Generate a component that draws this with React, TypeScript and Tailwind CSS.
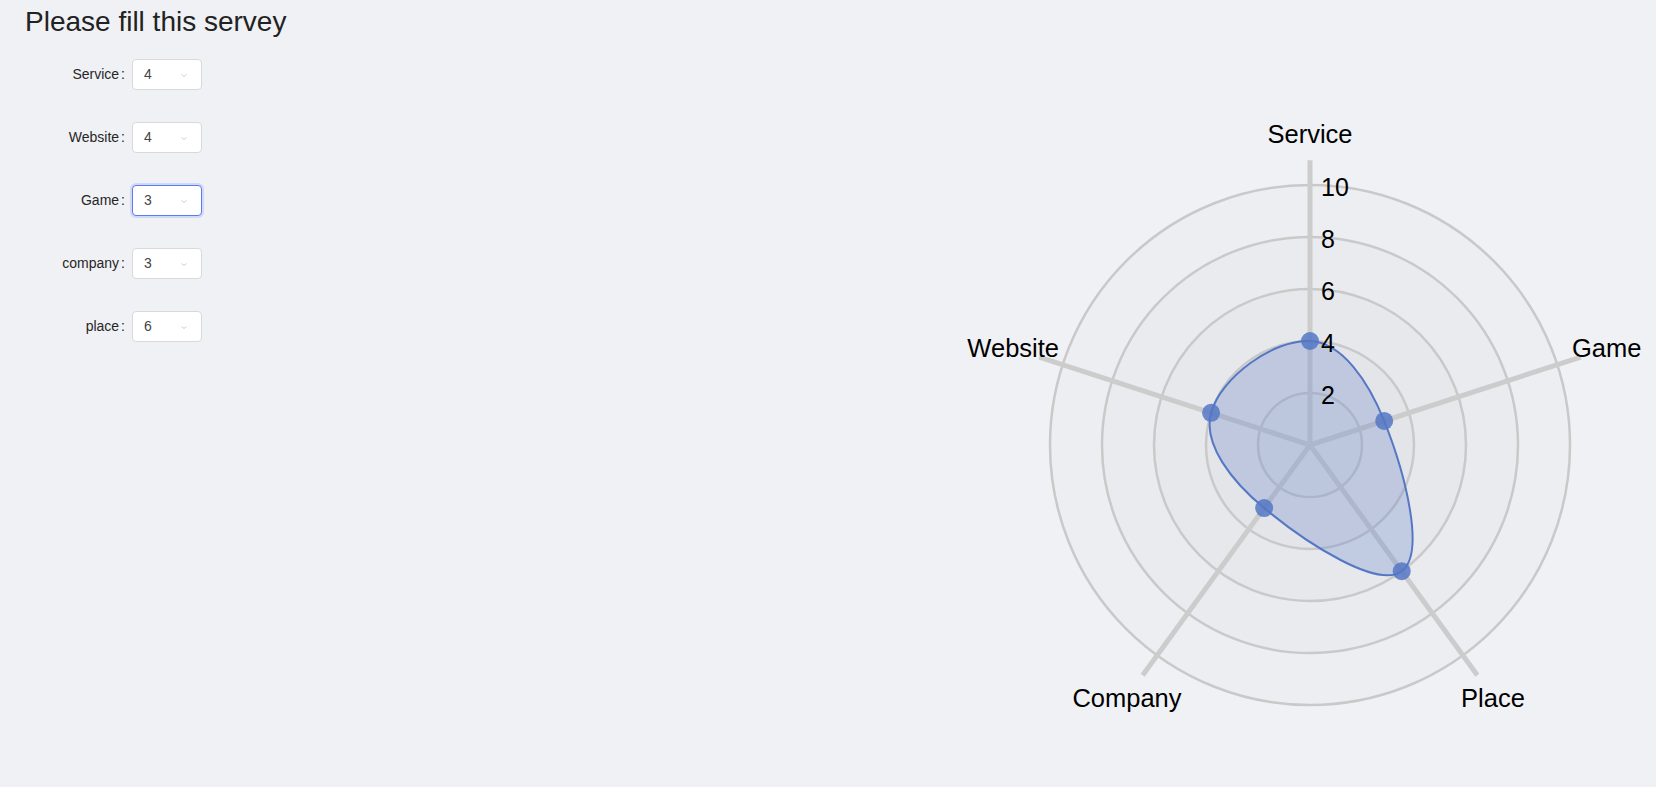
import { useState } from "react";

type Item = { label: string; value: number; angle: number };

const ITEMS: Item[] = [
  { label: "Service", value: 4, angle: 0 },
  { label: "Website", value: 4, angle: 288 },
  { label: "Game", value: 3, angle: 72 },
  { label: "company", value: 3, angle: 216 },
  { label: "place", value: 6, angle: 144 },
];

const FONT = '"Liberation Sans", Arial, sans-serif';

// chart geometry (svg coords)
const CX = 370;
const CY = 345;
const UNIT = 26;

const point = (deg: number, v: number) => {
  const a = (Math.PI * deg) / 180;
  return { x: CX + Math.sin(a) * v * UNIT, y: CY - Math.cos(a) * v * UNIT };
};

// closed spline, same idea as chart.js tension
const splinePath = (pts: { x: number; y: number }[], t: number) => {
  const n = pts.length;
  const cps = pts.map((cur, i) => {
    const prev = pts[(i - 1 + n) % n];
    const next = pts[(i + 1) % n];
    const d01 = Math.hypot(cur.x - prev.x, cur.y - prev.y);
    const d12 = Math.hypot(next.x - cur.x, next.y - cur.y);
    const s01 = d01 / (d01 + d12);
    const s12 = d12 / (d01 + d12);
    const fa = t * s01;
    const fb = t * s12;
    return {
      prev: { x: cur.x - fa * (next.x - prev.x), y: cur.y - fa * (next.y - prev.y) },
      next: { x: cur.x + fb * (next.x - prev.x), y: cur.y + fb * (next.y - prev.y) },
    };
  });
  let d = `M${pts[0].x},${pts[0].y}`;
  for (let i = 0; i < n; i++) {
    const j = (i + 1) % n;
    d += ` C${cps[i].next.x},${cps[i].next.y} ${cps[j].prev.x},${cps[j].prev.y} ${pts[j].x},${pts[j].y}`;
  }
  return d + " Z";
};

const Radar = ({ items }: { items: Item[] }) => {
  const sorted = [...items].sort((a, b) => a.angle - b.angle);
  const pts = sorted.map((it) => point(it.angle, it.value));
  const rings = [10, 8, 6, 4, 2];

  return (
    <svg width={716} height={640} className="mt-[100px] block" style={{ fontFamily: FONT }}>
      {rings.map((r) => (
        <circle key={"f" + r} cx={CX} cy={CY} r={r * UNIT} fill="rgba(40,45,70,0.016)" />
      ))}
      {rings.map((r) => (
        <circle key={r} cx={CX} cy={CY} r={r * UNIT} fill="none" stroke="#c9c9c9" strokeWidth={2.5} />
      ))}
      {sorted.map((it) => {
        const e = point(it.angle, 10.95);
        return <line key={it.label} x1={CX} y1={CY} x2={e.x} y2={e.y} stroke="#cccccc" strokeWidth={5} />;
      })}
      <path d={splinePath(pts, 0.4)} fill="rgba(85,119,196,0.26)" stroke="#5577c4" strokeWidth={2} />
      {pts.map((p, i) => (
        <circle key={i} cx={p.x} cy={p.y} r={9} fill="#5577c4" fillOpacity={0.85} />
      ))}
      <g fontSize={25} fill="#000">
        {rings.map((r) => (
          <text key={r} x={381} y={CY - r * UNIT + 11}>
            {r}
          </text>
        ))}
      </g>
      <g fontSize={25.5} fill="#000">
        <text x={370} y={43} textAnchor="middle">Service</text>
        <text x={119} y={257} textAnchor="end">Website</text>
        <text x={632} y={257}>Game</text>
        <text x={187} y={607} textAnchor="middle">Company</text>
        <text x={553} y={607} textAnchor="middle">Place</text>
      </g>
    </svg>
  );
};

const Field = ({ label, value, focused }: { label: string; value: number; focused?: boolean }) => {
  const [val, setVal] = useState(String(value));
  return (
    <div className="flex items-center h-[31px]">
      <div className="w-[102px] text-right text-[14px] text-[#262626] pr-[1px]">
        {label}
        <span className="ml-[2px]">:</span>
      </div>
      <div
        className={
          focused
            ? "relative ml-[6px] w-[70px] h-[31px] rounded-[4px] bg-white border border-[#5b7cf0] shadow-[0_0_0_2px_rgba(91,124,240,0.2)]"
            : "relative ml-[6px] w-[70px] h-[31px] rounded-[4px] bg-white border border-[#d9d9d9]"
        }
      >
        <select
          value={val}
          onChange={(e) => setVal(e.target.value)}
          className="appearance-none w-full h-full bg-transparent pl-[11px] text-[14px] text-[#444] outline-none"
        >
          {[1, 2, 3, 4, 5, 6, 7, 8, 9, 10].map((n) => (
            <option key={n} value={n}>
              {n}
            </option>
          ))}
        </select>
        <svg width="8" height="5" viewBox="0 0 8 5" className="absolute right-[13px] top-[13px] pointer-events-none">
          <path d="M1.5 1.5 L4 3.5 L6.5 1.5" fill="none" stroke="#cfcfcf" strokeWidth="1" />
        </svg>
      </div>
    </div>
  );
};

export default function App() {
  return (
    <div className="flex min-h-screen bg-[#f0f1f5]" style={{ fontFamily: FONT }}>
      <div className="w-[940px] shrink-0 pl-[25px] pt-[5px]">
        <h1 className="text-[28px] leading-[34px] text-[#222]">Please fill this servey</h1>
        <div className="mt-[20px] flex flex-col gap-[32px] -ml-px">
          {ITEMS.map((it) => (
            <Field key={it.label} label={it.label} value={it.value} focused={it.label === "Game"} />
          ))}
        </div>
      </div>
      <Radar items={ITEMS} />
    </div>
  );
}
